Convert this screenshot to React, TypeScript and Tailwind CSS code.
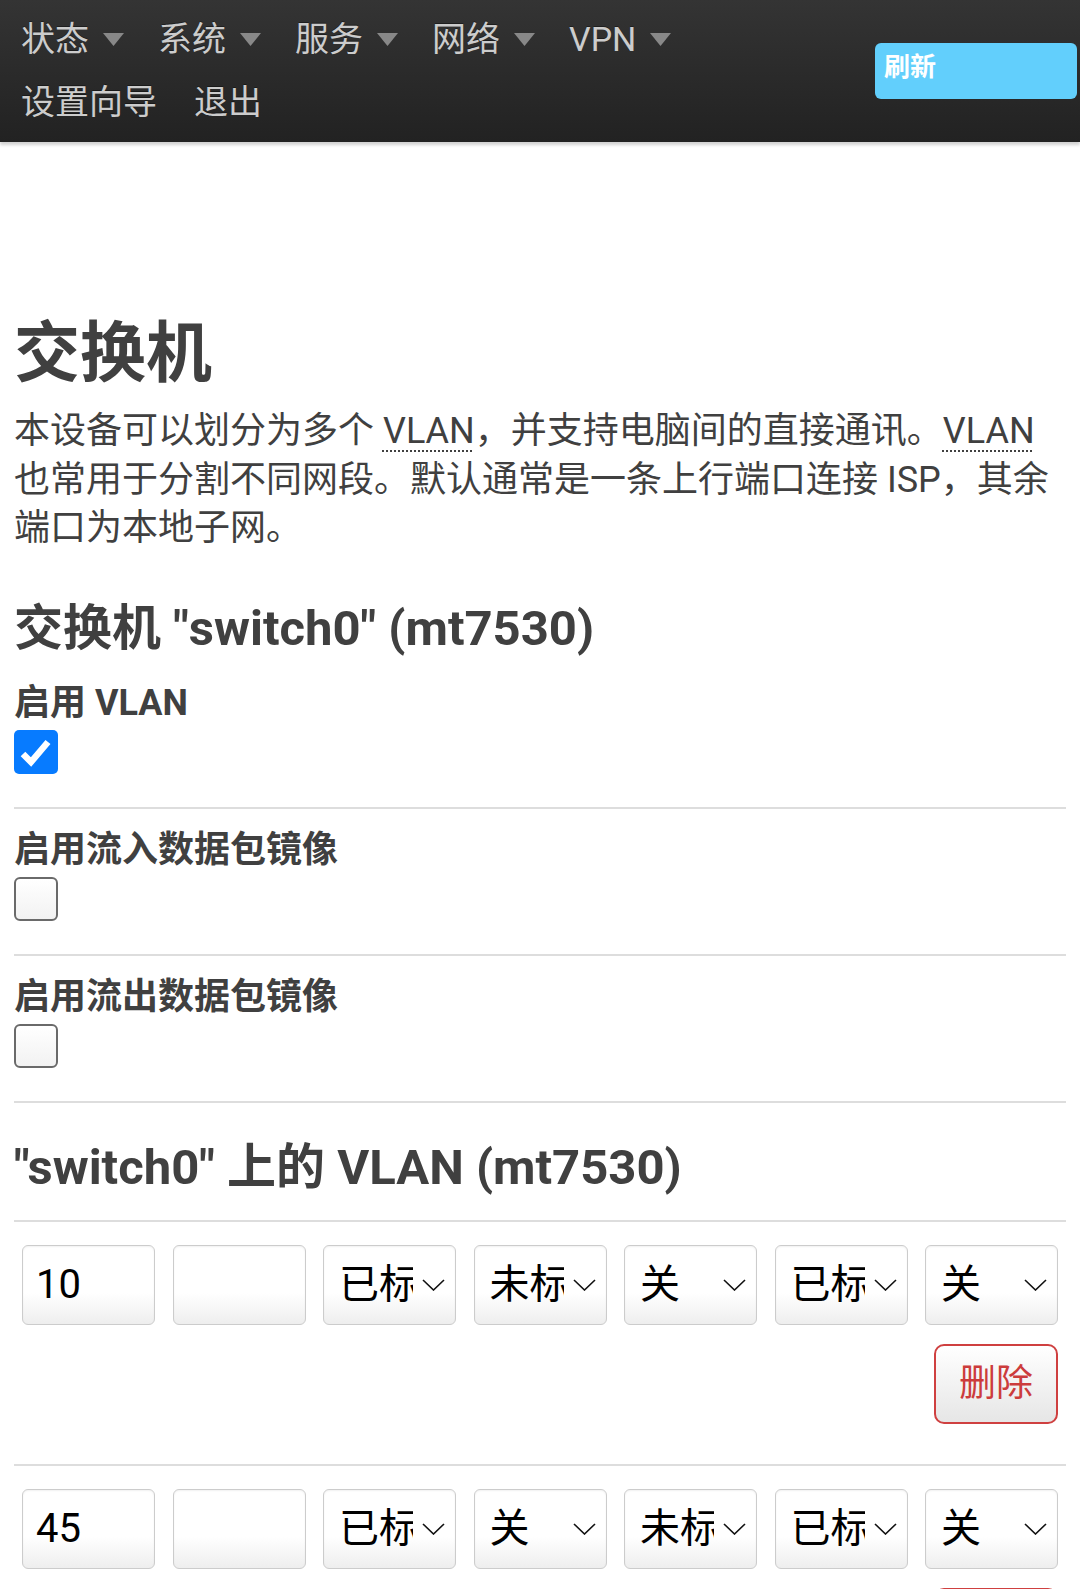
import React from "react";

type Cell = { kind: "input" | "select"; value: string };

const menus = ["状态", "系统", "服务", "网络", "VPN"];

const vlans: Cell[][] = [
  [
    { kind: "input", value: "10" },
    { kind: "input", value: "" },
    { kind: "select", value: "已标" },
    { kind: "select", value: "未标" },
    { kind: "select", value: "关" },
    { kind: "select", value: "已标" },
    { kind: "select", value: "关" },
  ],
  [
    { kind: "input", value: "45" },
    { kind: "input", value: "" },
    { kind: "select", value: "已标" },
    { kind: "select", value: "关" },
    { kind: "select", value: "未标" },
    { kind: "select", value: "已标" },
    { kind: "select", value: "关" },
  ],
];

const Caret = () => (
  <svg className="ml-[14px] h-[13px] w-[21px] shrink-0" viewBox="0 0 21 13">
    <path d="M0 0 H21 L10.5 13 Z" fill="#888" />
  </svg>
);

const Checkbox = ({ checked }: { checked: boolean }) =>
  checked ? (
    <div className="flex h-[44px] w-[44px] items-center justify-center rounded-[5px] bg-[#077bff]">
      <svg className="h-[44px] w-[44px]" viewBox="0 0 44 44">
        <path d="M9 24 L17 32 L34 12" stroke="#fff" strokeWidth="6.5" fill="none" />
      </svg>
    </div>
  ) : (
    <div className="h-[44px] w-[44px] rounded-[6px] border-2 border-[#6a6a6a] bg-linear-to-b from-white to-[#f2f2f2]" />
  );

const Flag = ({ label, checked, first }: { label: string; checked: boolean; first?: boolean }) => (
  <div className={first ? "border-b-2 border-[#ddd] pt-[20px] pb-[33px]" : "border-b-2 border-[#ddd] pt-[17px] pb-[33px]"}>
    <div className="text-[36px] leading-[48px] font-bold">{label}</div>
    <div className="mt-[3px]">
      <Checkbox checked={checked} />
    </div>
  </div>
);

const Field = ({ cell }: { cell: Cell }) => {
  const box =
    "flex h-[80px] items-center rounded-[6px] border-[1.5px] border-[#ccc] bg-linear-to-b from-white from-60% to-[#eee] shadow-[inset_0_1px_2px_rgba(0,0,0,0.06)] text-black";
  if (cell.kind === "input") {
    return (
      <div className={box + " pl-[13px]"}>
        <span className="text-[40px] leading-[48px]">{cell.value}</span>
      </div>
    );
  }
  return (
    <div className={box + " pl-[15px] pr-[10px]"}>
      <span className="min-w-0 flex-1 overflow-hidden whitespace-nowrap text-[40px] leading-[48px]">{cell.value}</span>
      <svg className="ml-[9px] h-[12px] w-[23px] shrink-0" viewBox="0 0 23 12">
        <path d="M1 1 L11.5 11 L22 1" stroke="#111" strokeWidth="1.6" fill="none" />
      </svg>
    </div>
  );
};

const VlanRow = ({ cells }: { cells: Cell[] }) => (
  <div className="border-b-2 border-[#ddd] pt-[23px] pb-[40px]">
    <div className="grid grid-cols-7 gap-x-[17.5px] px-[8px]">
      {cells.map((c, i) => (
        <Field key={i} cell={c} />
      ))}
    </div>
    <div className="mt-[19px] flex justify-end pr-[8px]">
      <button className="h-[80px] w-[124px] rounded-[10px] border-2 border-[#cf4040] bg-linear-to-b from-white to-[#e6e6e6] text-[37px] text-[#cc3c3c]">
        删除
      </button>
    </div>
  </div>
);

export default function App() {
  return (
    <div className="min-h-[1589px] bg-white font-['Roboto','Noto_Sans_CJK_SC',sans-serif]">
      <header className="relative z-10 flex h-[142px] justify-between bg-linear-to-b from-[#343434] to-[#222] pl-[21px] pr-[3px] shadow-[0_3px_3px_rgba(0,0,0,0.18)]">
        <nav className="pt-[8px] text-[34px] leading-[63px] text-[#ccc] [text-shadow:0_-1px_0_rgba(0,0,0,0.4)]">
          <div className="flex items-center">
            {menus.map((m) => (
              <span key={m} className="mr-[34px] flex items-center">
                <span>{m}</span>
                <Caret />
              </span>
            ))}
          </div>
          <div className="flex items-center gap-[37px]">
            <span>设置向导</span>
            <span>退出</span>
          </div>
        </nav>
        <button className="mt-[43px] flex h-[56px] w-[202px] items-start self-start rounded-[6px] bg-[#62cffc] pl-[9px] pt-[7px] text-left text-[26px] leading-[34px] font-bold text-white">
          刷新
        </button>
      </header>

      <main className="px-[14px] text-[#404040]">
        <h1 className="mt-[171px] text-[66px] leading-[82px] font-bold">交换机</h1>
        <p className="mt-[12px] text-[36px] leading-[48.6px]">
          本设备可以划分为多个{" "}
          <abbr title="虚拟局域网" className="underline decoration-dotted decoration-[2px] underline-offset-[7px]">
            VLAN
          </abbr>
          ，并支持电脑间的直接通讯。
          <abbr title="虚拟局域网" className="underline decoration-dotted decoration-[2px] underline-offset-[7px]">
            VLAN
          </abbr>{" "}
          也常用于分割不同网段。默认通常是一条上行端口连接 ISP，其余端口为本地子网。
        </p>

        <h2 className="mt-[46px] text-[49px] leading-[60px] font-bold">交换机 "switch0" (mt7530)</h2>
        <Flag label="启用 VLAN" checked first />
        <Flag label="启用流入数据包镜像" checked={false} />
        <Flag label="启用流出数据包镜像" checked={false} />

        <h3 className="mt-[35px] border-b-2 border-[#ddd] pb-[22px] text-[49px] leading-[60px] font-bold">
          "switch0" 上的 VLAN (mt7530)
        </h3>
        {vlans.map((row, i) => (
          <VlanRow key={i} cells={row} />
        ))}
      </main>
    </div>
  );
}
